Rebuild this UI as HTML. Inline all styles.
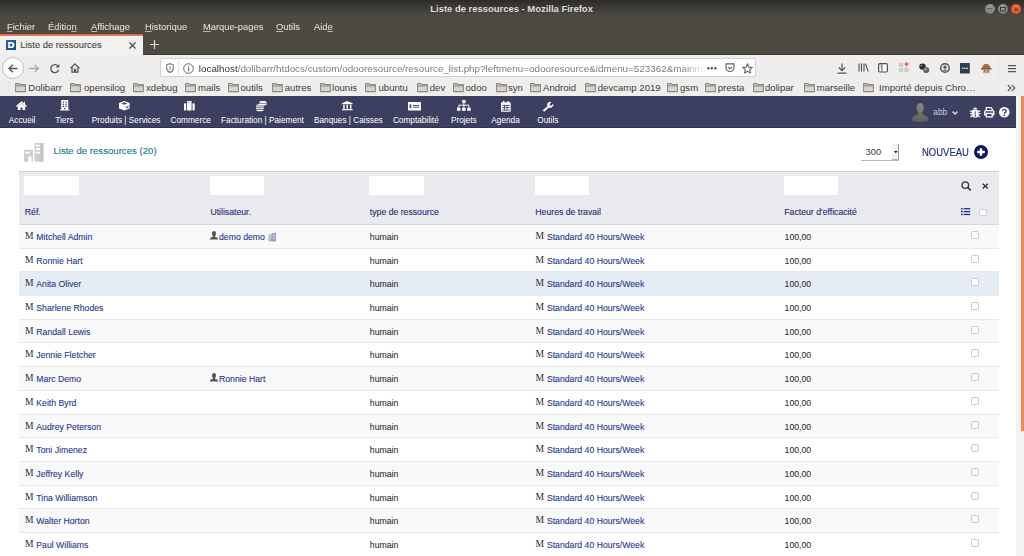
<!DOCTYPE html>
<html><head><meta charset="utf-8"><style>
*{box-sizing:border-box}
html,body{margin:0;padding:0;width:1024px;height:556px;overflow:hidden;background:#fff;font-family:"Liberation Sans",sans-serif}
.a{position:absolute}
.t{position:absolute;white-space:nowrap;line-height:1}
svg{position:absolute;overflow:visible}
.menu{color:#dfdbd2;font-size:9.8px;-webkit-text-stroke:0.1px #dfdbd2;transform:scaleX(0.955);transform-origin:0 0}
.menu u{text-decoration-thickness:0.7px;text-underline-offset:1px;text-decoration-color:rgba(223,219,210,0.75)}
.bm{color:#3c3c3c;font-size:9.6px;top:84px}
.nt{color:#fff;font-size:8.25px;top:117.3px}
.th{color:#282c78;font-size:8.7px;-webkit-text-stroke:0.12px currentColor}
.td{font-size:8.7px;color:#333;-webkit-text-stroke:0.1px currentColor}
.lk{color:#29358f}
.ms{font-family:"Liberation Serif",serif;font-size:9.6px;color:#2a2a2a;font-weight:normal}
</style></head><body>
<div class="a" style="left:0px;top:0px;width:1024px;height:15px;background:linear-gradient(#2c2b28,#3d3b37 50%,#4b4944)"></div>
<div class="t " style="left:430.3px;top:3.9px;color:#dfdbd2;font-size:9.45px;font-weight:bold">Liste de ressources - Mozilla Firefox</div>
<div class="a" style="left:984.5999999999999px;top:3.6px;width:10.4px;height:10.4px;border-radius:50%;background:radial-gradient(circle at 50% 35%,#a09e99,#6f6d68)"></div>
<div class="a" style="left:997.8px;top:3.6px;width:10.4px;height:10.4px;border-radius:50%;background:radial-gradient(circle at 50% 35%,#a09e99,#6f6d68)"></div>
<div class="a" style="left:1010.6px;top:3.9px;width:10.4px;height:10.4px;border-radius:50%;background:radial-gradient(circle at 50% 35%,#f27045,#dc4b1f)"></div>
<svg style="left:987.3px;top:8.3px" width="5" height="1.5" viewBox="0 0 5 1.5"><rect x="0" y="0.2" width="5" height="1" fill="#55544f"/></svg>
<svg style="left:1000.2px;top:6.8px" width="5.8" height="4.4" viewBox="0 0 5.8 4.4"><rect x="0.5" y="0.5" width="4.8" height="3.4" fill="none" stroke="#3e3d39" stroke-width="1"/></svg>
<svg style="left:1013.5px;top:6.8px" width="4.6" height="4.6" viewBox="0 0 4.6 4.6"><path d="M0.6 0.6L4 4M4 0.6L0.6 4" stroke="#4a200e" stroke-width="1"/></svg>
<div class="a" style="left:0px;top:15px;width:1024px;height:40px;background:#4d4a44"></div>
<div class="t menu" style="left:6.7px;top:22.4px;"><u>F</u>ichier</div>
<div class="t menu" style="left:47.8px;top:22.4px;">Éditio<u>n</u></div>
<div class="t menu" style="left:91px;top:22.4px;"><u>A</u>ffichage</div>
<div class="t menu" style="left:145px;top:22.4px;"><u>H</u>istorique</div>
<div class="t menu" style="left:202.5px;top:22.4px;"><u>M</u>arque-pages</div>
<div class="t menu" style="left:276.3px;top:22.4px;"><u>O</u>utils</div>
<div class="t menu" style="left:314.4px;top:22.4px;">Aid<u>e</u></div>
<div class="a" style="left:0px;top:53.5px;width:1024px;height:1.5px;background:#3a3834"></div>
<div class="a" style="left:0px;top:34px;width:143.2px;height:21px;background:#f2f1ef"></div>
<div class="a" style="left:0px;top:34px;width:143.2px;height:2px;background:linear-gradient(#d95a2c,#f08a60)"></div>
<svg style="left:6px;top:40px" width="10" height="10" viewBox="0 0 10 10"><defs><linearGradient id="dg" x1="0" y1="0" x2="1" y2="1"><stop offset="0" stop-color="#2b68ad"/><stop offset="1" stop-color="#16487f"/></linearGradient></defs><rect width="10" height="10" fill="url(#dg)"/><path d="M2.2 1.9H5.3A3.1 3.1 0 0 1 5.3 8.1H2.2Z" fill="#fff"/><ellipse cx="5" cy="5" rx="1.4" ry="1.5" fill="#1e5896"/></svg>
<div class="t " style="left:20.3px;top:39.6px;color:#444;font-size:9.4px;-webkit-text-stroke:0.1px #444">Liste de ressources</div>
<svg style="left:129px;top:41.5px" width="7" height="7" viewBox="0 0 7 7"><path d="M0.5 0.5L6.5 6.5M6.5 0.5L0.5 6.5" stroke="#4a4a4a" stroke-width="1.2"/></svg>
<svg style="left:149.5px;top:40px" width="9" height="9" viewBox="0 0 9 9"><path d="M4.5 0V9M0 4.5H9" stroke="#dcd8cf" stroke-width="1.2"/></svg>
<div class="a" style="left:0px;top:55px;width:1024px;height:41px;background:#efeeec"></div>
<div class="a" style="left:2.2px;top:57.2px;width:21.5px;height:21.5px;border-radius:50%;border:1px solid #c2c1be;background:#fbfbfa"></div>
<svg style="left:7.9px;top:63.5px" width="10" height="9" viewBox="0 0 10 9"><path d="M9.5 4.5H1M5 0.7L1 4.5L5 8.3" fill="none" stroke="#555" stroke-width="1.4"/></svg>
<svg style="left:28.6px;top:63.5px" width="10.5" height="9" viewBox="0 0 10.5 9"><path d="M0 4.5H9.5M5.5 0.7L9.5 4.5L5.5 8.3" fill="none" stroke="#aaa" stroke-width="1.3"/></svg>
<svg style="left:49.9px;top:63.5px" width="10" height="9" viewBox="0 0 10 9"><path d="M8 2.2A4 4 0 1 0 8.6 6" fill="none" stroke="#555" stroke-width="1.4"/><path d="M5.6 3.6H9.4V0Z" fill="#555"/></svg>
<svg style="left:70.3px;top:63px" width="10" height="10" viewBox="0 0 10 10"><path d="M0.6 5.2L5 0.9L9.4 5.2M2 4V9.2H8V4" fill="none" stroke="#555" stroke-width="1.3" stroke-linejoin="round"/><rect x="3.9" y="5.8" width="2.2" height="3.4" fill="#555"/></svg>
<div class="a" style="left:160px;top:58px;width:596px;height:19px;border:1px solid #d3d2cf;border-radius:2px;background:#fff"></div>
<svg style="left:165.5px;top:62.5px" width="8" height="10" viewBox="0 0 8 10"><path d="M4 0.7L7.3 1.8V5.2C7.3 7.3 5.6 8.8 4 9.4C2.4 8.8 0.7 7.3 0.7 5.2V1.8Z" fill="none" stroke="#777" stroke-width="1.1"/><path d="M3.4 3H4.6V7H3.4Z" fill="#999"/></svg>
<div class="a" style="left:178.2px;top:61px;width:1px;height:13px;background:#e0dfdc"></div>
<svg style="left:182.5px;top:62.5px" width="11" height="11" viewBox="0 0 11 11"><circle cx="5.5" cy="5.5" r="4.8" fill="none" stroke="#666" stroke-width="1"/><rect x="5" y="4.6" width="1.1" height="3.8" fill="#666"/><rect x="5" y="2.6" width="1.1" height="1.1" fill="#666"/></svg>
<div class="t" style="left:198.8px;top:61.6px;font-size:9.85px;line-height:13px;height:14px;width:506px;overflow:hidden;-webkit-mask-image:linear-gradient(90deg,#000 484px,transparent 506px)"><span style="color:#333">localhost</span><span style="color:#7c7c7c">/dolibarr/htdocs/custom/odooresource/resource_list.php?leftmenu=odooresource&amp;idmenu=523362&amp;mainmenu=odooresource</span></div>
<svg style="left:707px;top:66.5px" width="10" height="3" viewBox="0 0 10 3"><circle cx="1.3" cy="1.3" r="1.2" fill="#555"/><circle cx="4.8" cy="1.3" r="1.2" fill="#555"/><circle cx="8.3" cy="1.3" r="1.2" fill="#555"/></svg>
<svg style="left:724.8px;top:63px" width="10" height="10" viewBox="0 0 10 10"><path d="M1 0.8H9V4.5A4 4 0 0 1 1 4.5Z" fill="none" stroke="#666" stroke-width="1.2"/><path d="M3 3.8L5 5.8L7 3.8" fill="none" stroke="#666" stroke-width="1.2"/></svg>
<svg style="left:742px;top:62.5px" width="11" height="11" viewBox="0 0 11 11"><path d="M5.5 0.8L6.9 4.2L10.4 4.4L7.7 6.7L8.6 10.1L5.5 8.2L2.4 10.1L3.3 6.7L0.6 4.4L4.1 4.2Z" fill="none" stroke="#666" stroke-width="1.1" stroke-linejoin="round"/></svg>
<svg style="left:837px;top:62.5px" width="10" height="11" viewBox="0 0 10 11"><path d="M5 0.5V7.5M1.8 4.5L5 7.7L8.2 4.5M0.5 10.2H9.5" fill="none" stroke="#555" stroke-width="1.2"/></svg>
<svg style="left:858px;top:63px" width="11" height="9" viewBox="0 0 11 9"><path d="M1 0.5V8.5M3.5 0.5V8.5M6 0.5V8.5M7.5 0.8L10.2 8.5" fill="none" stroke="#555" stroke-width="1.1"/></svg>
<svg style="left:878px;top:62.8px" width="10" height="9.6" viewBox="0 0 10 9.6"><rect x="0.6" y="0.6" width="8.8" height="8.4" rx="1.2" fill="#fff" stroke="#555" stroke-width="1.2"/><rect x="3.4" y="0.8" width="1" height="8" fill="#555"/><rect x="1.4" y="2" width="1.3" height="1" fill="#aaa"/><rect x="1.4" y="4" width="1.3" height="1" fill="#aaa"/></svg>
<svg style="left:898.5px;top:62px" width="11" height="11" viewBox="0 0 11 11"><rect x="0" y="1" width="4.2" height="4.2" fill="#ccc"/><rect x="0" y="6" width="4.2" height="4.2" fill="#ccc"/><rect x="5.3" y="6" width="4.2" height="4.2" fill="#ccc"/><path d="M7.5 0V4.5M5.3 2.2H9.8" stroke="#ff4f2a" stroke-width="1.3"/></svg>
<svg style="left:919px;top:62.8px" width="11" height="11" viewBox="0 0 11 11"><circle cx="3.5" cy="3.6" r="3.2" fill="#2a2a2a"/><circle cx="2.6" cy="2.6" r="0.9" fill="#999"/><circle cx="7.2" cy="7" r="3.1" fill="#6a6a6a"/><circle cx="6.5" cy="6.2" r="0.9" fill="#bbb"/></svg>
<svg style="left:939.5px;top:62.5px" width="10" height="10" viewBox="0 0 10 10"><circle cx="5" cy="5" r="4.3" fill="none" stroke="#555" stroke-width="1.5"/><circle cx="5" cy="4.2" r="1.6" fill="#555"/><path d="M2.2 7.8Q5 5.2 7.8 7.8Z" fill="#555"/></svg>
<svg style="left:960.3px;top:62.7px" width="9.8" height="10.5" viewBox="0 0 9.8 10.5"><rect x="0" y="0" width="9.8" height="10.5" rx="0.5" fill="#2c3e4f"/><rect x="1.8" y="4.6" width="1.6" height="1.4" fill="#d8dde2"/><rect x="4.1" y="4.6" width="1.6" height="1.4" fill="#d8dde2"/><rect x="6.4" y="4.6" width="1.6" height="1.4" fill="#d8dde2"/></svg>
<svg style="left:980.6px;top:62.5px" width="10.5" height="10.5" viewBox="0 0 10.5 10.5"><path d="M1 6.5Q1 1 5.25 1Q9.5 1 9.5 6.5Z" fill="#a36a47"/><rect x="0" y="5.2" width="10.5" height="1.3" fill="#7a4a30"/><rect x="2" y="6.5" width="6.5" height="3.8" fill="#d4a27a"/><rect x="3" y="7.4" width="1.2" height="1" fill="#5a3a25"/><rect x="6.3" y="7.4" width="1.2" height="1" fill="#5a3a25"/></svg>
<div class="a" style="left:998px;top:58.5px;width:1px;height:19px;background:#e2e1de"></div>
<svg style="left:1008px;top:65.3px" width="8" height="7.2" viewBox="0 0 8 7.2"><path d="M0 0.6H8M0 3.6H8M0 6.6H8" stroke="#555" stroke-width="1.1"/></svg>
<div class="a" style="left:7.5px;top:81px;width:1px;height:13px;background:#e6e5e2"></div>
<svg style="left:15px;top:83px" width="11" height="9.2" viewBox="0 0 11 9.2"><path d="M0.6 0.6H4L5 1.6H10.4V8.6H0.6Z" fill="#d6d5d1" stroke="#8a8985" stroke-width="1.1" stroke-linejoin="round"/><path d="M0.6 2.9H10.4" stroke="#8a8985" stroke-width="1"/></svg>
<div class="t bm" style="left:28.3px;top:82.7px;">Dolibarr</div>
<svg style="left:70px;top:83px" width="11" height="9.2" viewBox="0 0 11 9.2"><path d="M0.6 0.6H4L5 1.6H10.4V8.6H0.6Z" fill="#d6d5d1" stroke="#8a8985" stroke-width="1.1" stroke-linejoin="round"/><path d="M0.6 2.9H10.4" stroke="#8a8985" stroke-width="1"/></svg>
<div class="t bm" style="left:84px;top:82.7px;">opensilog</div>
<svg style="left:132.5px;top:83px" width="11" height="9.2" viewBox="0 0 11 9.2"><path d="M0.6 0.6H4L5 1.6H10.4V8.6H0.6Z" fill="#d6d5d1" stroke="#8a8985" stroke-width="1.1" stroke-linejoin="round"/><path d="M0.6 2.9H10.4" stroke="#8a8985" stroke-width="1"/></svg>
<div class="t bm" style="left:146px;top:82.7px;">xdebug</div>
<svg style="left:185px;top:83px" width="11" height="9.2" viewBox="0 0 11 9.2"><path d="M0.6 0.6H4L5 1.6H10.4V8.6H0.6Z" fill="#d6d5d1" stroke="#8a8985" stroke-width="1.1" stroke-linejoin="round"/><path d="M0.6 2.9H10.4" stroke="#8a8985" stroke-width="1"/></svg>
<div class="t bm" style="left:198px;top:82.7px;">mails</div>
<svg style="left:228px;top:83px" width="11" height="9.2" viewBox="0 0 11 9.2"><path d="M0.6 0.6H4L5 1.6H10.4V8.6H0.6Z" fill="#d6d5d1" stroke="#8a8985" stroke-width="1.1" stroke-linejoin="round"/><path d="M0.6 2.9H10.4" stroke="#8a8985" stroke-width="1"/></svg>
<div class="t bm" style="left:240.5px;top:82.7px;">outils</div>
<svg style="left:272px;top:83px" width="11" height="9.2" viewBox="0 0 11 9.2"><path d="M0.6 0.6H4L5 1.6H10.4V8.6H0.6Z" fill="#d6d5d1" stroke="#8a8985" stroke-width="1.1" stroke-linejoin="round"/><path d="M0.6 2.9H10.4" stroke="#8a8985" stroke-width="1"/></svg>
<div class="t bm" style="left:284.75px;top:82.7px;">autres</div>
<svg style="left:320px;top:83px" width="11" height="9.2" viewBox="0 0 11 9.2"><path d="M0.6 0.6H4L5 1.6H10.4V8.6H0.6Z" fill="#d6d5d1" stroke="#8a8985" stroke-width="1.1" stroke-linejoin="round"/><path d="M0.6 2.9H10.4" stroke="#8a8985" stroke-width="1"/></svg>
<div class="t bm" style="left:332px;top:82.7px;">lounis</div>
<svg style="left:365px;top:83px" width="11" height="9.2" viewBox="0 0 11 9.2"><path d="M0.6 0.6H4L5 1.6H10.4V8.6H0.6Z" fill="#d6d5d1" stroke="#8a8985" stroke-width="1.1" stroke-linejoin="round"/><path d="M0.6 2.9H10.4" stroke="#8a8985" stroke-width="1"/></svg>
<div class="t bm" style="left:378.5px;top:82.7px;">ubuntu</div>
<svg style="left:416.75px;top:83px" width="11" height="9.2" viewBox="0 0 11 9.2"><path d="M0.6 0.6H4L5 1.6H10.4V8.6H0.6Z" fill="#d6d5d1" stroke="#8a8985" stroke-width="1.1" stroke-linejoin="round"/><path d="M0.6 2.9H10.4" stroke="#8a8985" stroke-width="1"/></svg>
<div class="t bm" style="left:429.75px;top:82.7px;">dev</div>
<svg style="left:453px;top:83px" width="11" height="9.2" viewBox="0 0 11 9.2"><path d="M0.6 0.6H4L5 1.6H10.4V8.6H0.6Z" fill="#d6d5d1" stroke="#8a8985" stroke-width="1.1" stroke-linejoin="round"/><path d="M0.6 2.9H10.4" stroke="#8a8985" stroke-width="1"/></svg>
<div class="t bm" style="left:465.5px;top:82.7px;">odoo</div>
<svg style="left:495.5px;top:83px" width="11" height="9.2" viewBox="0 0 11 9.2"><path d="M0.6 0.6H4L5 1.6H10.4V8.6H0.6Z" fill="#d6d5d1" stroke="#8a8985" stroke-width="1.1" stroke-linejoin="round"/><path d="M0.6 2.9H10.4" stroke="#8a8985" stroke-width="1"/></svg>
<div class="t bm" style="left:508px;top:82.7px;">syn</div>
<svg style="left:530px;top:83px" width="11" height="9.2" viewBox="0 0 11 9.2"><path d="M0.6 0.6H4L5 1.6H10.4V8.6H0.6Z" fill="#d6d5d1" stroke="#8a8985" stroke-width="1.1" stroke-linejoin="round"/><path d="M0.6 2.9H10.4" stroke="#8a8985" stroke-width="1"/></svg>
<div class="t bm" style="left:543px;top:82.7px;">Android</div>
<svg style="left:584.5px;top:83px" width="11" height="9.2" viewBox="0 0 11 9.2"><path d="M0.6 0.6H4L5 1.6H10.4V8.6H0.6Z" fill="#d6d5d1" stroke="#8a8985" stroke-width="1.1" stroke-linejoin="round"/><path d="M0.6 2.9H10.4" stroke="#8a8985" stroke-width="1"/></svg>
<div class="t bm" style="left:597.75px;top:82.7px;">devcamp 2019</div>
<svg style="left:667px;top:83px" width="11" height="9.2" viewBox="0 0 11 9.2"><path d="M0.6 0.6H4L5 1.6H10.4V8.6H0.6Z" fill="#d6d5d1" stroke="#8a8985" stroke-width="1.1" stroke-linejoin="round"/><path d="M0.6 2.9H10.4" stroke="#8a8985" stroke-width="1"/></svg>
<div class="t bm" style="left:680px;top:82.7px;">gsm</div>
<svg style="left:705px;top:83px" width="11" height="9.2" viewBox="0 0 11 9.2"><path d="M0.6 0.6H4L5 1.6H10.4V8.6H0.6Z" fill="#d6d5d1" stroke="#8a8985" stroke-width="1.1" stroke-linejoin="round"/><path d="M0.6 2.9H10.4" stroke="#8a8985" stroke-width="1"/></svg>
<div class="t bm" style="left:717.75px;top:82.7px;">presta</div>
<svg style="left:752.75px;top:83px" width="11" height="9.2" viewBox="0 0 11 9.2"><path d="M0.6 0.6H4L5 1.6H10.4V8.6H0.6Z" fill="#d6d5d1" stroke="#8a8985" stroke-width="1.1" stroke-linejoin="round"/><path d="M0.6 2.9H10.4" stroke="#8a8985" stroke-width="1"/></svg>
<div class="t bm" style="left:765px;top:82.7px;">dolipar</div>
<svg style="left:804px;top:83px" width="11" height="9.2" viewBox="0 0 11 9.2"><path d="M0.6 0.6H4L5 1.6H10.4V8.6H0.6Z" fill="#d6d5d1" stroke="#8a8985" stroke-width="1.1" stroke-linejoin="round"/><path d="M0.6 2.9H10.4" stroke="#8a8985" stroke-width="1"/></svg>
<div class="t bm" style="left:816.75px;top:82.7px;">marseille</div>
<svg style="left:862.5px;top:83px" width="11" height="9.2" viewBox="0 0 11 9.2"><path d="M0.6 0.6H4L5 1.6H10.4V8.6H0.6Z" fill="#d6d5d1" stroke="#8a8985" stroke-width="1.1" stroke-linejoin="round"/><path d="M0.6 2.9H10.4" stroke="#8a8985" stroke-width="1"/></svg>
<div class="t bm" style="left:879px;top:82.7px;">Importé depuis Chro…</div>
<svg style="left:1007px;top:84px" width="9" height="8" viewBox="0 0 9 8"><path d="M0.8 0.8L3.8 4L0.8 7.2M4.8 0.8L7.8 4L4.8 7.2" fill="none" stroke="#555" stroke-width="1.2"/></svg>
<div class="a" style="left:0px;top:96px;width:1016px;height:32px;background:#3c3f5f;border-bottom:1px solid #31354f"></div>
<div class="t nt" style="left:8.8px;top:117.3px;">Accueil</div>
<div class="t nt" style="left:55.3px;top:117.3px;">Tiers</div>
<div class="t nt" style="left:91.8px;top:117.3px;">Produits | Services</div>
<div class="t nt" style="left:170.5px;top:117.3px;">Commerce</div>
<div class="t nt" style="left:221px;top:117.3px;">Facturation | Paiement</div>
<div class="t nt" style="left:314px;top:117.3px;">Banques | Caisses</div>
<div class="t nt" style="left:392.9px;top:117.3px;">Comptabilité</div>
<div class="t nt" style="left:450.9px;top:117.3px;">Projets</div>
<div class="t nt" style="left:491.3px;top:117.3px;">Agenda</div>
<div class="t nt" style="left:537.3px;top:117.3px;">Outils</div>
<svg style="left:16.3px;top:101px" width="11" height="9" viewBox="0 0 11 9"><path d="M5.5 0.3L0 5L1 6L5.5 2.2L10 6L11 5L9 3.3V0.8H7.8V2.3Z" fill="#fff"/><path d="M1.8 5.6L5.5 2.6L9.2 5.6V9H6.5V6.5H4.5V9H1.8Z" fill="#fff"/></svg>
<svg style="left:59.5px;top:100.4px" width="9.5" height="10.4" viewBox="0 0 9.5 10.4"><path d="M1.2 0H8.3V9.4H9.5V10.4H0V9.4H1.2Z" fill="#fff"/><g fill="#3b3f5f"><rect x="2.8" y="1.6" width="1.3" height="1.2"/><rect x="5.4" y="1.6" width="1.3" height="1.2"/><rect x="2.8" y="3.7" width="1.3" height="1.2"/><rect x="5.4" y="3.7" width="1.3" height="1.2"/><rect x="2.8" y="5.8" width="1.3" height="1.2"/><rect x="5.4" y="5.8" width="1.3" height="1.2"/><rect x="4.1" y="7.9" width="1.3" height="1.5"/></g></svg>
<svg style="left:119.4px;top:101.2px" width="10.6" height="9.5" viewBox="0 0 10.6 9.5"><path d="M5.3 0L10.6 2.1V7.4L5.3 9.5L0 7.4V2.1Z" fill="#fff"/><path d="M2.2 2.5L5.3 1.2L8.4 2.5L5.3 3.8Z" fill="#3b3f5f" opacity="0.9"/><path d="M6.4 5.4L9.6 4V6.6L6.4 8Z" fill="#3b3f5f" opacity="0.35"/><path d="M7 6.6L9.2 5.6V7Z" fill="#3b3f5f"/></svg>
<svg style="left:184px;top:100.7px" width="10.8" height="9.4" viewBox="0 0 10.8 9.4"><rect x="0" y="2.2" width="2.2" height="7.2" rx="0.7" fill="#fff"/><rect x="3" y="0" width="4.6" height="9.4" rx="0.5" fill="#fff"/><rect x="4.3" y="0.8" width="2" height="1" fill="#8890b8"/><rect x="8.5" y="2.2" width="2.2" height="7.2" rx="0.7" fill="#fff"/></svg>
<svg style="left:255.6px;top:100.8px" width="10.8" height="10.2" viewBox="0 0 10.8 10.2"><rect x="3.2" y="0" width="7.6" height="4.6" rx="2" fill="#fff"/><path d="M3.2 2.3H10.8" stroke="#3b3f5f" stroke-width="0.7"/><rect x="0" y="3.2" width="7.8" height="7" rx="2.2" fill="#fff"/><path d="M0 5H7.8M0 6.8H7.8M0 8.5H7.8" stroke="#3b3f5f" stroke-width="0.7"/></svg>
<svg style="left:341.6px;top:101.4px" width="10.6" height="9.3" viewBox="0 0 10.6 9.3"><path d="M5.3 0L10.6 2.3V3.2H0V2.3Z" fill="#fff"/><rect x="1.2" y="3.8" width="1.5" height="4" fill="#fff"/><rect x="4.5" y="3.8" width="1.5" height="4" fill="#fff"/><rect x="7.9" y="3.8" width="1.5" height="4" fill="#fff"/><rect x="0" y="8.1" width="10.6" height="1.2" fill="#fff"/></svg>
<svg style="left:408.1px;top:101.5px" width="13" height="8.5" viewBox="0 0 13 8.5"><rect x="0" y="0" width="13" height="8.5" rx="0.6" fill="#fff"/><path d="M2.4 2.2V6.4" stroke="#3b3f5f" stroke-width="0.8"/><path d="M3.4 3H2 1.8V4.2H3.2V5.4H1.6" fill="none" stroke="#3b3f5f" stroke-width="0.7"/><path d="M5 3.5H11M5 5.2H11" stroke="#3b3f5f" stroke-width="0.9"/></svg>
<svg style="left:456.6px;top:100.4px" width="13.7" height="10.8" viewBox="0 0 13.7 10.8"><rect x="5.1" y="0" width="3.5" height="3" fill="#fff"/><path d="M6.85 3V5M1.8 7.5V5.2H11.9V7.5M6.85 5.2V7.5" fill="none" stroke="#fff" stroke-width="1"/><rect x="0" y="7.6" width="3.5" height="3.2" fill="#fff"/><rect x="5.1" y="7.6" width="3.5" height="3.2" fill="#fff"/><rect x="10.2" y="7.6" width="3.5" height="3.2" fill="#fff"/></svg>
<svg style="left:500.8px;top:100.7px" width="9.7" height="10.8" viewBox="0 0 9.7 10.8"><rect x="0" y="1.2" width="9.7" height="9.6" rx="0.7" fill="#fff"/><rect x="2" y="0" width="1.3" height="2.2" fill="#fff"/><rect x="6.4" y="0" width="1.3" height="2.2" fill="#fff"/><g fill="#3b3f5f"><rect x="0.9" y="3.9" width="7.9" height="0.8"/><rect x="0.9" y="6.3" width="7.9" height="0.8"/><rect x="0.9" y="8.7" width="7.9" height="0.8"/><rect x="3.2" y="3.9" width="0.8" height="5.6"/><rect x="5.7" y="3.9" width="0.8" height="5.6"/></g></svg>
<svg style="left:542.5px;top:101.5px" width="10.5" height="9.3" viewBox="0 0 10.5 9.3"><path d="M10.2 2.2L8.2 3.9L6.6 3.5L6.3 1.9L8.1 0.3C6.5 -0.3 4.5 0.5 4.4 2.6C4.3 3.3 4.5 3.9 4.7 4.3L0.6 7.7C-0.2 8.4 0.8 9.8 1.7 9.1L5.8 5.4C6.3 5.6 6.8 5.7 7.4 5.6C9.3 5.3 10.4 3.6 10.2 2.2Z" fill="#fff" stroke="#fff" stroke-width="0.5"/></svg>
<svg style="left:912px;top:102.5px" width="16.5" height="18.7" viewBox="0 0 16.5 18.7"><defs><linearGradient id="ag" x1="0" y1="0" x2="0" y2="1"><stop offset="0" stop-color="#8a8a82"/><stop offset="1" stop-color="#5e5f58"/></linearGradient></defs><path d="M8.2 0C5.8 0 4.4 2.2 4.6 5C4.8 7.6 5.6 9.3 6.4 10.3C6.4 11.2 5.8 11.7 3.8 12.4C1.2 13.3 0 14.5 0 16.4C0 18 2.5 18.7 8.2 18.7C13.9 18.7 16.5 18 16.5 16.4C16.5 14.5 15.2 13.3 12.6 12.4C10.6 11.7 10 11.2 10 10.3C10.8 9.3 11.6 7.6 11.8 5C12 2.2 10.6 0 8.2 0Z" fill="url(#ag)"/></svg>
<div class="t " style="left:933.3px;top:107.6px;color:#c9cad6;font-size:8.3px">abb</div>
<svg style="left:952px;top:110.6px" width="6" height="3.6" viewBox="0 0 6 3.6"><path d="M0.6 0.6L3 3L5.4 0.6" fill="none" stroke="#d4d5df" stroke-width="1.5"/></svg>
<svg style="left:969.6px;top:107.3px" width="10.4" height="10.7" viewBox="0 0 10.4 10.7"><path d="M3.2 2.5A2 2 0 0 1 7.2 2.5Z" fill="#fff"/><path d="M1.9 3H8.5V7.4A3.3 3.3 0 0 1 1.9 7.4Z" fill="#fff"/><path d="M0 3.8L1.9 4.8M10.4 3.8L8.5 4.8M0 6.6H1.9M10.4 6.6H8.5M0.4 10.2L2.3 8.5M10 10.2L8.1 8.5" stroke="#fff" stroke-width="1.1"/><rect x="4.75" y="4.2" width="0.9" height="6" fill="#3b3f5f"/></svg>
<svg style="left:984.2px;top:107.4px" width="10.5" height="10.5" viewBox="0 0 10.5 10.5"><path d="M2.3 3.6V0.7H7L8.2 1.9V3.6" fill="none" stroke="#fff" stroke-width="1.3"/><path d="M2 7.8H0.7V4.8Q0.7 3.6 1.9 3.6H8.6Q9.8 3.6 9.8 4.8V7.8H8.5" fill="none" stroke="#fff" stroke-width="1.3"/><rect x="2.3" y="6.4" width="5.9" height="3.5" fill="none" stroke="#fff" stroke-width="1.3"/></svg>
<svg style="left:998.9px;top:107.4px" width="10.6" height="10.6" viewBox="0 0 10.6 10.6"><circle cx="5.3" cy="5.3" r="5.3" fill="#fff"/><path d="M3.5 4.1A1.8 1.7 0 1 1 5.6 5.8Q5.3 6 5.3 6.8" fill="none" stroke="#3b3f5f" stroke-width="1.4"/><rect x="4.6" y="7.6" width="1.4" height="1.4" fill="#3b3f5f"/></svg>
<div class="a" style="left:1016px;top:96px;width:8px;height:460px;background:#f3f3f2"></div>
<div class="a" style="left:1020.8px;top:96px;width:3.2px;height:335px;background:#ef8a5f"></div>
<svg style="left:23.5px;top:143px" width="19.4" height="18.7" viewBox="0 0 19.4 18.7"><rect x="0" y="6.8" width="8.9" height="11.9" fill="#cdcdcd"/><rect x="0.9" y="8.7" width="4.7" height="1.9" fill="#fff"/><rect x="4.2" y="13.4" width="3.3" height="5.3" fill="#fff"/><rect x="10.5" y="0" width="8.9" height="18.7" fill="#cdcdcd"/><rect x="16.3" y="0" width="3.1" height="18.7" fill="#c6c6c6"/><rect x="11.5" y="1.7" width="4.6" height="1.8" fill="#fff"/><rect x="11.5" y="5.2" width="4.6" height="1.8" fill="#fff"/><rect x="11.5" y="8.7" width="4.6" height="1.8" fill="#fff"/></svg>
<div class="t " style="left:53.4px;top:146.3px;color:#137a88;font-size:9.65px;-webkit-text-stroke:0.1px #137a88">Liste de ressources (20)</div>
<div class="a" style="left:861px;top:160px;width:37.5px;height:1px;background:#b8b8b8"></div>
<div class="t " style="left:865.5px;top:146.7px;color:#3a3a3a;font-size:9.4px">300</div>
<div class="a" style="left:892px;top:143.8px;width:6.6px;height:16px;background:#f3f3f3;border-right:1px solid #9a9a9a;border-bottom:1px solid #b0b0b0"></div>
<svg style="left:893.6px;top:150.6px" width="3.6" height="2.2" viewBox="0 0 3.6 2.2"><path d="M0 0H3.6L1.8 2.2Z" fill="#111"/></svg>
<div class="t " style="left:921.9px;top:148.1px;color:#1f2a78;font-size:10.1px;-webkit-text-stroke:0.12px #1f2a78;transform:scaleX(0.94);transform-origin:0 0">NOUVEAU</div>
<svg style="left:974.3px;top:145.4px" width="14" height="14" viewBox="0 0 14 14"><circle cx="7" cy="7" r="7" fill="#0b1766"/><path d="M7 3.2V10.8M3.2 7H10.8" stroke="#fff" stroke-width="2.4"/></svg>
<div class="a" style="left:19px;top:171px;width:980px;height:54px;background:#e9eaed;border-top:1px solid #d0d0d3;border-bottom:1px solid #d8d8db"></div>
<div class="a" style="left:23.8px;top:176px;width:55.2px;height:19px;background:#fff"></div>
<div class="a" style="left:209.8px;top:176px;width:54.2px;height:19px;background:#fff"></div>
<div class="a" style="left:369px;top:176px;width:55px;height:19px;background:#fff"></div>
<div class="a" style="left:535px;top:176px;width:54.3px;height:19px;background:#fff"></div>
<div class="a" style="left:784px;top:176px;width:54.2px;height:19px;background:#fff"></div>
<div class="t th" style="left:24.8px;top:208px;">Réf.</div>
<div class="t th" style="left:210.4px;top:208px;">Utilisateur.</div>
<div class="t th" style="left:369.8px;top:208px;">type de ressource</div>
<div class="t th" style="left:535.3px;top:208px;">Heures de travail</div>
<div class="t th" style="left:784.3px;top:208px;">Facteur d'efficacité</div>
<svg style="left:961.4px;top:180.6px" width="10" height="10" viewBox="0 0 10 10"><circle cx="4.3" cy="4.1" r="3.3" fill="none" stroke="#333" stroke-width="1.35"/><path d="M6.7 6.5L9.2 8.9" stroke="#333" stroke-width="1.6" stroke-linecap="round"/></svg>
<svg style="left:981.9px;top:182.6px" width="6.6" height="6.2" viewBox="0 0 6.6 6.2"><path d="M0.7 0.7L5.9 5.5M5.9 0.7L0.7 5.5" stroke="#333" stroke-width="1.45"/></svg>
<svg style="left:961.3px;top:208.1px" width="9.2" height="7.2" viewBox="0 0 9.2 7.2"><g fill="#1e2a78"><rect x="0" y="0" width="1.6" height="1.5"/><rect x="0" y="2.85" width="1.6" height="1.5"/><rect x="0" y="5.7" width="1.6" height="1.5"/><rect x="2.6" y="0.1" width="6.6" height="1.3"/><rect x="2.6" y="2.95" width="6.6" height="1.3"/><rect x="2.6" y="5.8" width="6.6" height="1.3"/></g></svg>
<div class="a" style="left:979.3px;top:208.9px;width:7.4px;height:7.2px;background:#fdfdfd;border:1px solid #cdcdcd;border-radius:1.5px"></div>
<div class="a" style="left:19px;top:225px;width:980px;height:24px;background:#f9f9f9;border-bottom:1px solid #e8e8e8"></div>
<div class="t ms" style="left:24.9px;top:230.6px;">M</div>
<div class="t td lk" style="left:36.3px;top:233.1px;">Mitchell Admin</div>
<svg style="left:210.3px;top:231.1px" width="8" height="8.6" viewBox="0 0 8 8.6"><path d="M4 0C2.7 0 1.9 1.1 2 2.6C2.1 4 2.6 4.8 3 5.2V5.7C2.2 6 0.6 6.3 0.2 7.2C0 7.7 0 8.6 0 8.6H8C8 8.6 8 7.7 7.8 7.2C7.4 6.3 5.8 6 5 5.7V5.2C5.4 4.8 5.9 4 6 2.6C6.1 1.1 5.3 0 4 0Z" fill="#555"/></svg>
<div class="t td lk" style="left:219px;top:233.1px;">demo demo</div>
<svg style="left:267.9px;top:233.2px" width="8.4" height="8.4" viewBox="0 0 8.4 8.4"><rect x="0.5" y="1.5" width="3.5" height="6.9" fill="#a8b0cc"/><rect x="3.8" y="0" width="4.2" height="8.4" fill="#8f99c0"/><g fill="#e8ecf8"><rect x="1.2" y="3" width="2" height="0.8"/><rect x="1.2" y="5" width="2" height="0.8"/><rect x="4.6" y="1.5" width="2.6" height="0.8"/><rect x="4.6" y="3.5" width="2.6" height="0.8"/><rect x="4.6" y="5.5" width="2.6" height="0.8"/></g></svg>
<div class="t td" style="left:369.8px;top:233.1px;">humain</div>
<div class="t ms" style="left:535.5px;top:230.6px;">M</div>
<div class="t td lk" style="left:546.9px;top:233.1px;">Standard 40 Hours/Week</div>
<div class="t td" style="left:784.6px;top:233.1px;">100,00</div>
<div class="a" style="left:971.4px;top:231.2px;width:7.6px;height:7.4px;background:#fdfdfd;border:1px solid #c8c8c8;border-radius:1.5px"></div>
<div class="a" style="left:19px;top:249px;width:980px;height:23px;background:#fff;border-bottom:1px solid #e8e8e8"></div>
<div class="t ms" style="left:24.9px;top:254.6px;">M</div>
<div class="t td lk" style="left:36.3px;top:257.1px;">Ronnie Hart</div>
<div class="t td" style="left:369.8px;top:257.1px;">humain</div>
<div class="t ms" style="left:535.5px;top:254.6px;">M</div>
<div class="t td lk" style="left:546.9px;top:257.1px;">Standard 40 Hours/Week</div>
<div class="t td" style="left:784.6px;top:257.1px;">100,00</div>
<div class="a" style="left:971.4px;top:255.2px;width:7.6px;height:7.4px;background:#fdfdfd;border:1px solid #c8c8c8;border-radius:1.5px"></div>
<div class="a" style="left:19px;top:272px;width:980px;height:24px;background:#e6ecf4;border-bottom:1px solid #e8e8e8"></div>
<div class="t ms" style="left:24.9px;top:277.6px;">M</div>
<div class="t td lk" style="left:36.3px;top:280.1px;">Anita Oliver</div>
<div class="t td" style="left:369.8px;top:280.1px;">humain</div>
<div class="t ms" style="left:535.5px;top:277.6px;">M</div>
<div class="t td lk" style="left:546.9px;top:280.1px;">Standard 40 Hours/Week</div>
<div class="t td" style="left:784.6px;top:280.1px;">100,00</div>
<div class="a" style="left:971.4px;top:278.2px;width:7.6px;height:7.4px;background:#fdfdfd;border:1px solid #c8c8c8;border-radius:1.5px"></div>
<div class="a" style="left:19px;top:296px;width:980px;height:24px;background:#fff;border-bottom:1px solid #e8e8e8"></div>
<div class="t ms" style="left:24.9px;top:301.6px;">M</div>
<div class="t td lk" style="left:36.3px;top:304.1px;">Sharlene Rhodes</div>
<div class="t td" style="left:369.8px;top:304.1px;">humain</div>
<div class="t ms" style="left:535.5px;top:301.6px;">M</div>
<div class="t td lk" style="left:546.9px;top:304.1px;">Standard 40 Hours/Week</div>
<div class="t td" style="left:784.6px;top:304.1px;">100,00</div>
<div class="a" style="left:971.4px;top:302.2px;width:7.6px;height:7.4px;background:#fdfdfd;border:1px solid #c8c8c8;border-radius:1.5px"></div>
<div class="a" style="left:19px;top:320px;width:980px;height:23px;background:#f9f9f9;border-bottom:1px solid #e8e8e8"></div>
<div class="t ms" style="left:24.9px;top:325.6px;">M</div>
<div class="t td lk" style="left:36.3px;top:328.1px;">Randall Lewis</div>
<div class="t td" style="left:369.8px;top:328.1px;">humain</div>
<div class="t ms" style="left:535.5px;top:325.6px;">M</div>
<div class="t td lk" style="left:546.9px;top:328.1px;">Standard 40 Hours/Week</div>
<div class="t td" style="left:784.6px;top:328.1px;">100,00</div>
<div class="a" style="left:971.4px;top:326.2px;width:7.6px;height:7.4px;background:#fdfdfd;border:1px solid #c8c8c8;border-radius:1.5px"></div>
<div class="a" style="left:19px;top:343px;width:980px;height:24px;background:#fff;border-bottom:1px solid #e8e8e8"></div>
<div class="t ms" style="left:24.9px;top:348.6px;">M</div>
<div class="t td lk" style="left:36.3px;top:351.1px;">Jennie Fletcher</div>
<div class="t td" style="left:369.8px;top:351.1px;">humain</div>
<div class="t ms" style="left:535.5px;top:348.6px;">M</div>
<div class="t td lk" style="left:546.9px;top:351.1px;">Standard 40 Hours/Week</div>
<div class="t td" style="left:784.6px;top:351.1px;">100,00</div>
<div class="a" style="left:971.4px;top:349.2px;width:7.6px;height:7.4px;background:#fdfdfd;border:1px solid #c8c8c8;border-radius:1.5px"></div>
<div class="a" style="left:19px;top:367px;width:980px;height:24px;background:#f9f9f9;border-bottom:1px solid #e8e8e8"></div>
<div class="t ms" style="left:24.9px;top:372.6px;">M</div>
<div class="t td lk" style="left:36.3px;top:375.1px;">Marc Demo</div>
<svg style="left:210.3px;top:373.1px" width="8" height="8.6" viewBox="0 0 8 8.6"><path d="M4 0C2.7 0 1.9 1.1 2 2.6C2.1 4 2.6 4.8 3 5.2V5.7C2.2 6 0.6 6.3 0.2 7.2C0 7.7 0 8.6 0 8.6H8C8 8.6 8 7.7 7.8 7.2C7.4 6.3 5.8 6 5 5.7V5.2C5.4 4.8 5.9 4 6 2.6C6.1 1.1 5.3 0 4 0Z" fill="#555"/></svg>
<div class="t td lk" style="left:219px;top:375.1px;">Ronnie Hart</div>
<div class="t td" style="left:369.8px;top:375.1px;">humain</div>
<div class="t ms" style="left:535.5px;top:372.6px;">M</div>
<div class="t td lk" style="left:546.9px;top:375.1px;">Standard 40 Hours/Week</div>
<div class="t td" style="left:784.6px;top:375.1px;">100,00</div>
<div class="a" style="left:971.4px;top:373.2px;width:7.6px;height:7.4px;background:#fdfdfd;border:1px solid #c8c8c8;border-radius:1.5px"></div>
<div class="a" style="left:19px;top:391px;width:980px;height:24px;background:#fff;border-bottom:1px solid #e8e8e8"></div>
<div class="t ms" style="left:24.9px;top:396.6px;">M</div>
<div class="t td lk" style="left:36.3px;top:399.1px;">Keith Byrd</div>
<div class="t td" style="left:369.8px;top:399.1px;">humain</div>
<div class="t ms" style="left:535.5px;top:396.6px;">M</div>
<div class="t td lk" style="left:546.9px;top:399.1px;">Standard 40 Hours/Week</div>
<div class="t td" style="left:784.6px;top:399.1px;">100,00</div>
<div class="a" style="left:971.4px;top:397.2px;width:7.6px;height:7.4px;background:#fdfdfd;border:1px solid #c8c8c8;border-radius:1.5px"></div>
<div class="a" style="left:19px;top:415px;width:980px;height:23px;background:#f9f9f9;border-bottom:1px solid #e8e8e8"></div>
<div class="t ms" style="left:24.9px;top:420.6px;">M</div>
<div class="t td lk" style="left:36.3px;top:423.1px;">Audrey Peterson</div>
<div class="t td" style="left:369.8px;top:423.1px;">humain</div>
<div class="t ms" style="left:535.5px;top:420.6px;">M</div>
<div class="t td lk" style="left:546.9px;top:423.1px;">Standard 40 Hours/Week</div>
<div class="t td" style="left:784.6px;top:423.1px;">100,00</div>
<div class="a" style="left:971.4px;top:421.2px;width:7.6px;height:7.4px;background:#fdfdfd;border:1px solid #c8c8c8;border-radius:1.5px"></div>
<div class="a" style="left:19px;top:438px;width:980px;height:24px;background:#fff;border-bottom:1px solid #e8e8e8"></div>
<div class="t ms" style="left:24.9px;top:443.6px;">M</div>
<div class="t td lk" style="left:36.3px;top:446.1px;">Toni Jimenez</div>
<div class="t td" style="left:369.8px;top:446.1px;">humain</div>
<div class="t ms" style="left:535.5px;top:443.6px;">M</div>
<div class="t td lk" style="left:546.9px;top:446.1px;">Standard 40 Hours/Week</div>
<div class="t td" style="left:784.6px;top:446.1px;">100,00</div>
<div class="a" style="left:971.4px;top:444.2px;width:7.6px;height:7.4px;background:#fdfdfd;border:1px solid #c8c8c8;border-radius:1.5px"></div>
<div class="a" style="left:19px;top:462px;width:980px;height:24px;background:#f9f9f9;border-bottom:1px solid #e8e8e8"></div>
<div class="t ms" style="left:24.9px;top:467.6px;">M</div>
<div class="t td lk" style="left:36.3px;top:470.1px;">Jeffrey Kelly</div>
<div class="t td" style="left:369.8px;top:470.1px;">humain</div>
<div class="t ms" style="left:535.5px;top:467.6px;">M</div>
<div class="t td lk" style="left:546.9px;top:470.1px;">Standard 40 Hours/Week</div>
<div class="t td" style="left:784.6px;top:470.1px;">100,00</div>
<div class="a" style="left:971.4px;top:468.2px;width:7.6px;height:7.4px;background:#fdfdfd;border:1px solid #c8c8c8;border-radius:1.5px"></div>
<div class="a" style="left:19px;top:486px;width:980px;height:23px;background:#fff;border-bottom:1px solid #e8e8e8"></div>
<div class="t ms" style="left:24.9px;top:491.6px;">M</div>
<div class="t td lk" style="left:36.3px;top:494.1px;">Tina Williamson</div>
<div class="t td" style="left:369.8px;top:494.1px;">humain</div>
<div class="t ms" style="left:535.5px;top:491.6px;">M</div>
<div class="t td lk" style="left:546.9px;top:494.1px;">Standard 40 Hours/Week</div>
<div class="t td" style="left:784.6px;top:494.1px;">100,00</div>
<div class="a" style="left:971.4px;top:492.2px;width:7.6px;height:7.4px;background:#fdfdfd;border:1px solid #c8c8c8;border-radius:1.5px"></div>
<div class="a" style="left:19px;top:509px;width:980px;height:24px;background:#f9f9f9;border-bottom:1px solid #e8e8e8"></div>
<div class="t ms" style="left:24.9px;top:514.6px;">M</div>
<div class="t td lk" style="left:36.3px;top:517.1px;">Walter Horton</div>
<div class="t td" style="left:369.8px;top:517.1px;">humain</div>
<div class="t ms" style="left:535.5px;top:514.6px;">M</div>
<div class="t td lk" style="left:546.9px;top:517.1px;">Standard 40 Hours/Week</div>
<div class="t td" style="left:784.6px;top:517.1px;">100,00</div>
<div class="a" style="left:971.4px;top:515.2px;width:7.6px;height:7.4px;background:#fdfdfd;border:1px solid #c8c8c8;border-radius:1.5px"></div>
<div class="a" style="left:19px;top:533px;width:980px;height:24px;background:#fff;border-bottom:1px solid #e8e8e8"></div>
<div class="t ms" style="left:24.9px;top:538.6px;">M</div>
<div class="t td lk" style="left:36.3px;top:541.1px;">Paul Williams</div>
<div class="t td" style="left:369.8px;top:541.1px;">humain</div>
<div class="t ms" style="left:535.5px;top:538.6px;">M</div>
<div class="t td lk" style="left:546.9px;top:541.1px;">Standard 40 Hours/Week</div>
<div class="t td" style="left:784.6px;top:541.1px;">100,00</div>
<div class="a" style="left:971.4px;top:539.2px;width:7.6px;height:7.4px;background:#fdfdfd;border:1px solid #c8c8c8;border-radius:1.5px"></div>
</body></html>
